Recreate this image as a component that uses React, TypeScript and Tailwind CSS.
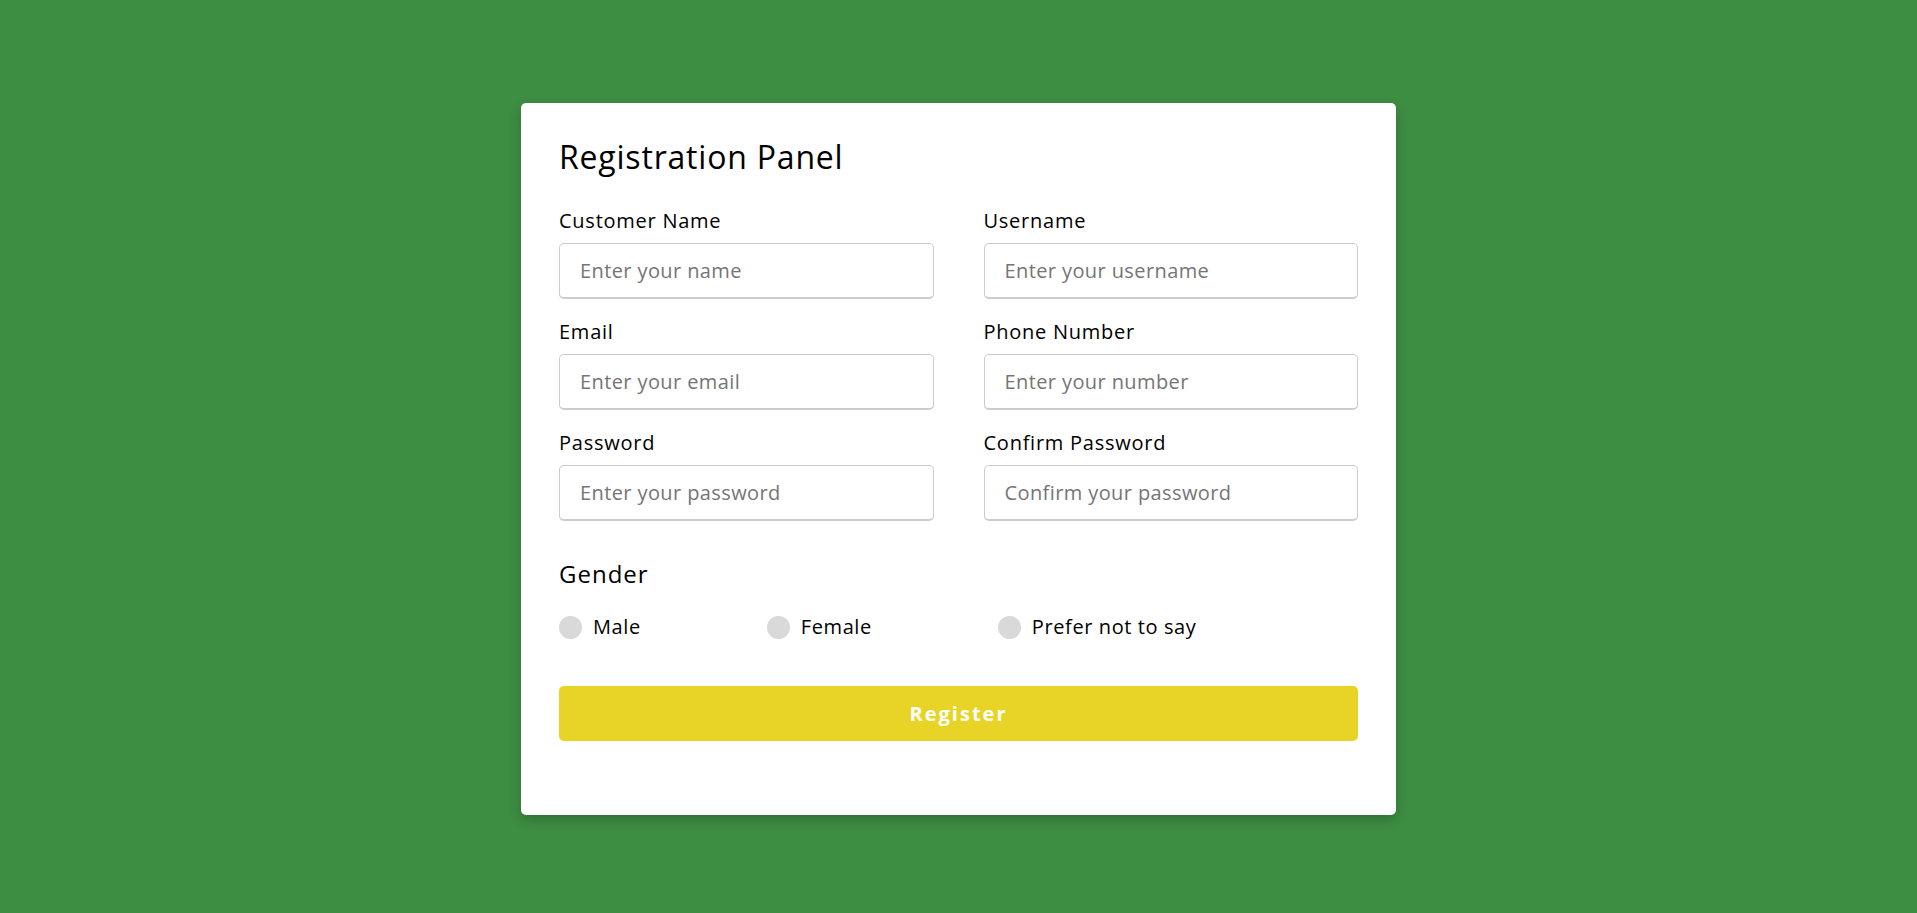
import React from "react"

const FIELDS = [
  { label: "Customer Name", placeholder: "Enter your name", type: "text" },
  { label: "Username", placeholder: "Enter your username", type: "text" },
  { label: "Email", placeholder: "Enter your email", type: "email" },
  { label: "Phone Number", placeholder: "Enter your number", type: "tel" },
  { label: "Password", placeholder: "Enter your password", type: "password" },
  { label: "Confirm Password", placeholder: "Confirm your password", type: "password" },
]

const GENDERS = ["Male", "Female", "Prefer not to say"]

export default function App() {
  return (
    <div className="min-h-screen bg-[#3d8d42] flex items-center justify-center pt-[5px] font-['Open_Sans',sans-serif] text-black">
      <div className="w-[875px] bg-white rounded-[5px] shadow-[0_5px_12px_rgba(0,0,0,0.2)] px-[38px] pt-[34px] pb-[74px]">
        {/* Title */}
        <h1 className="text-[32px] leading-[40px] font-medium tracking-[0.8px]">Registration Panel</h1>

        {/* Inputs */}
        <form className="mt-[31px]" onSubmit={(e) => e.preventDefault()}>
          <div className="grid grid-cols-2 gap-x-[50px] gap-y-[20px]">
            {FIELDS.map((f) => (
              <div key={f.label} className="flex flex-col">
                <label className="text-[20px] leading-[26px] font-medium tracking-[0.75px] mb-[9px]">{f.label}</label>
                <input
                  type={f.type}
                  placeholder={f.placeholder}
                  className="h-[56px] px-[20px] rounded-[5px] border border-[#cccccc] border-b-2 text-[20px] tracking-[0.4px] outline-none placeholder:text-[#757575]"
                />
              </div>
            ))}
          </div>

          {/* Gender */}
          <div className="mt-[37px]">
            <h2 className="text-[24px] leading-[32px] font-medium tracking-[1px]">Gender</h2>
            <div className="flex items-center gap-[126px] mt-[24px]">
              {GENDERS.map((g) => (
                <label key={g} className="flex items-center gap-[11px] text-[20px] leading-[26px] tracking-[0.6px]">
                  <span className="w-[23px] h-[23px] rounded-full bg-[#d9d9d9]" />
                  {g}
                </label>
              ))}
            </div>
          </div>

          <button
            type="submit"
            className="mt-[46px] w-full h-[55px] rounded-[5px] bg-[#e8d426] text-white text-[20px] leading-[28px] font-bold tracking-[2px]"
          >
            Register
          </button>
        </form>
      </div>
    </div>
  )
}
